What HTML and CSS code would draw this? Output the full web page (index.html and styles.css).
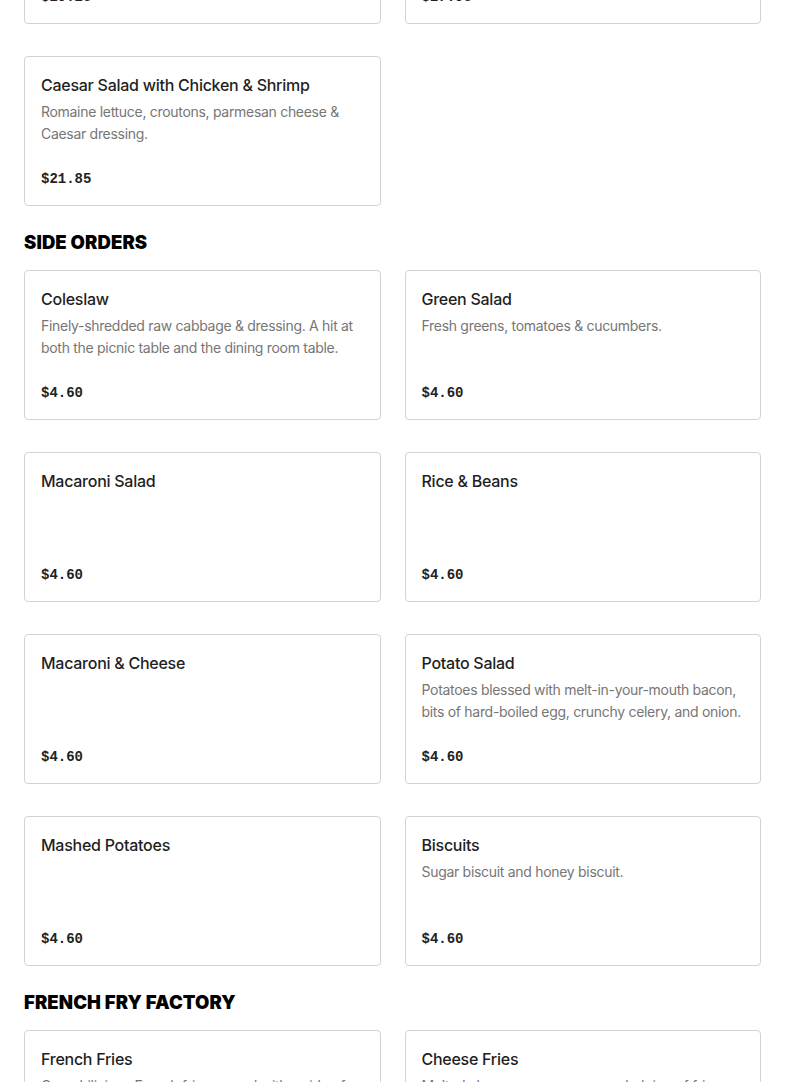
FILE: index.html
```html
<!DOCTYPE html>
<html lang="en">
<head>
<meta charset="utf-8">
<title>Menu</title>
<link rel="stylesheet" href="styles.css">
</head>
<body>
<main class="menu">
  <section class="section section-first">
    <div class="grid">
      <article class="card">
        <h3 class="card-title">Chef Salad</h3>
        <p class="card-desc">Mixed greens, ham, turkey, egg &amp; cheese.</p>
        <p class="card-price">$29.25</p>
      </article>
      <article class="card">
        <h3 class="card-title">Cobb Salad</h3>
        <p class="card-desc">Chicken, bacon, avocado, egg &amp; blue cheese.</p>
        <p class="card-price">$27.95</p>
      </article>
      <article class="card">
        <h3 class="card-title">Caesar Salad with Chicken &amp; Shrimp</h3>
        <p class="card-desc">Romaine lettuce, croutons, parmesan cheese &amp; Caesar dressing.</p>
        <p class="card-price">$21.85</p>
      </article>
    </div>
  </section>

  <section class="section">
    <h2 class="section-title">SIDE ORDERS</h2>
    <div class="grid">
      <article class="card">
        <h3 class="card-title">Coleslaw</h3>
        <p class="card-desc">Finely-shredded raw cabbage &amp; dressing. A hit at both the picnic table and the dining room table.</p>
        <p class="card-price">$4.60</p>
      </article>
      <article class="card">
        <h3 class="card-title">Green Salad</h3>
        <p class="card-desc">Fresh greens, tomatoes &amp; cucumbers.</p>
        <p class="card-price">$4.60</p>
      </article>
      <article class="card">
        <h3 class="card-title">Macaroni Salad</h3>
        <p class="card-price">$4.60</p>
      </article>
      <article class="card">
        <h3 class="card-title">Rice &amp; Beans</h3>
        <p class="card-price">$4.60</p>
      </article>
      <article class="card">
        <h3 class="card-title">Macaroni &amp; Cheese</h3>
        <p class="card-price">$4.60</p>
      </article>
      <article class="card">
        <h3 class="card-title">Potato Salad</h3>
        <p class="card-desc">Potatoes blessed with melt-in-your-mouth bacon, bits of hard-boiled egg, crunchy celery, and onion.</p>
        <p class="card-price">$4.60</p>
      </article>
      <article class="card">
        <h3 class="card-title">Mashed Potatoes</h3>
        <p class="card-price">$4.60</p>
      </article>
      <article class="card">
        <h3 class="card-title">Biscuits</h3>
        <p class="card-desc">Sugar biscuit and honey biscuit.</p>
        <p class="card-price">$4.60</p>
      </article>
    </div>
  </section>

  <section class="section">
    <h2 class="section-title">FRENCH FRY FACTORY</h2>
    <div class="grid">
      <article class="card">
        <h3 class="card-title">French Fries</h3>
        <p class="card-desc">Crunchilicious French fries served with a side of ketchup.</p>
        <p class="card-price">$4.95</p>
      </article>
      <article class="card">
        <h3 class="card-title">Cheese Fries</h3>
        <p class="card-desc">Melted cheese over a generous helping of fries.</p>
        <p class="card-price">$6.25</p>
      </article>
    </div>
  </section>
</main>
</body>
</html>
```

FILE: styles.css
```css
* {
  box-sizing: border-box;
}

html, body {
  margin: 0;
  padding: 0;
  background: #ffffff;
}

body {
  font-family: Inter, "Noto Sans", "Liberation Sans", sans-serif;
  color: #222222;
}

.menu {
  padding: 0 24px;
  margin-top: -126px;
}

.section-title {
  margin: 24px 0 16px;
  font-family: Inter, "Liberation Sans", sans-serif;
  font-weight: 900;
  font-size: 18.5px;
  line-height: 24px;
  letter-spacing: 0.1px;
  color: #000000;
}

.grid {
  display: grid;
  grid-template-columns: 1fr 1fr;
  column-gap: 24px;
  row-gap: 32px;
}

.card {
  display: flex;
  flex-direction: column;
  height: 150px;
  padding: 16px;
  border: 1px solid #d3d3d3;
  border-radius: 4px;
  background: #ffffff;
}

.card-title {
  margin: 0;
  font-size: 16px;
  line-height: 24px;
  font-weight: 500;
  letter-spacing: -0.26px;
  color: #1f1f1f;
}

.card-desc {
  margin: 4px 0 0;
  font-size: 14px;
  line-height: 22px;
  font-weight: 400;
  letter-spacing: -0.3px;
  color: #767676;
}

.card-price {
  margin: auto 0 0;
  font-family: "Liberation Mono", "DejaVu Sans Mono", monospace;
  font-weight: 700;
  font-size: 14px;
  line-height: 20px;
  color: #222222;
}
```
